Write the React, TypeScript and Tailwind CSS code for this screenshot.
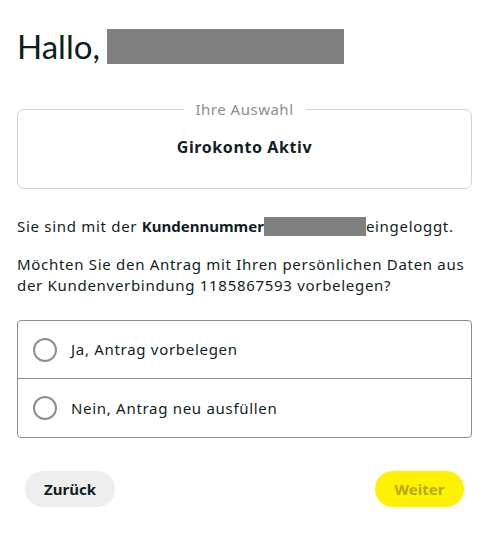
import React from "react";

function Radio({ label, last }: { label: string; last?: boolean }) {
  return (
    <label className={`flex items-center h-[58px] pl-[15px] ${last ? "" : "border-b border-[#8a8f92]"}`}>
      <span className="w-[24px] h-[24px] rounded-full border-2 border-[#8a8f92] bg-white shrink-0" />
      <span className="ml-[14px] text-[15px] tracking-[0.7px] text-[#0f1e24]">{label}</span>
    </label>
  );
}

export default function App() {
  return (
    <div className="w-[487px] h-[538px] bg-white pl-[17px] pr-[15px] text-[#0f1e24]" style={{ fontFamily: "'Noto Sans', sans-serif" }}>
      <div className="flex items-center pt-[29px] h-[64px]">
        <h1 className="text-[33px] leading-[35px] font-normal" style={{ fontFamily: "Lato, sans-serif" }}>Hallo,</h1>
        <div className="ml-[7px] w-[237px] h-[35px] bg-[#808080]" />
      </div>

      <fieldset className="mt-[37px] border border-[#cfd2d4] rounded-[7px] h-[88px] px-0 pt-[20px] text-center">
        <legend className="mx-auto px-[12px] text-[15px] tracking-[0.5px] text-[#8a8f92] leading-[16px]">Ihre Auswahl</legend>
        <div className="text-[16px] tracking-[0.6px] font-bold leading-[20px]">Girokonto Aktiv</div>
      </fieldset>

      <p className="mt-[27px] text-[15px] tracking-[0.7px] leading-[21px] flex items-center">
        <span>Sie sind mit der&nbsp;</span>
        <b className="font-bold tracking-normal">Kundennummer</b>
        <span className="inline-block w-[102px] h-[19px] bg-[#808080]" />
        <span>eingeloggt.</span>
      </p>

      <p className="mt-[17px] pr-[2px] text-[15px] tracking-[0.7px] leading-[21px]">
        Möchten Sie den Antrag mit Ihren persönlichen Daten aus der Kundenverbindung 1185867593 vorbelegen?
      </p>

      <div className="mt-[24px] border border-[#8a8f92] rounded-[4px]">
        <Radio label="Ja, Antrag vorbelegen" />
        <Radio label="Nein, Antrag neu ausfüllen" last />
      </div>

      <div className="mt-[33px] flex justify-between px-[8px]">
        <button className="w-[90px] h-[36px] rounded-full bg-[#eeeeee] text-[15px] font-bold text-[#0f1e24]">Zurück</button>
        <button className="w-[89px] h-[36px] rounded-full bg-[#fff200] text-[15px] font-bold text-[#b3aa00]">Weiter</button>
      </div>
    </div>
  );
}
